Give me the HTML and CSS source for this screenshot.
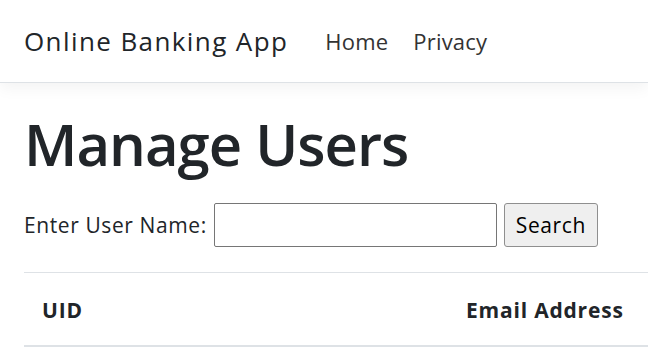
FILE: index.html
```html
<!DOCTYPE html>
<html lang="en">
<head>
  <meta charset="UTF-8">
  <meta name="viewport" content="width=device-width, initial-scale=1.0">
  <title>Manage Users - Online Banking App</title>
  <link rel="stylesheet" href="styles.css">
</head>
<body>
  <header class="navbar">
    <a class="brand" href="#">Online Banking App</a>
    <nav class="nav">
      <a class="nav-link" href="#">Home</a>
      <a class="nav-link" href="#">Privacy</a>
    </nav>
  </header>

  <main class="container">
    <h1>Manage Users</h1>
    <form class="search-form">
      <label for="username">Enter User Name:</label>
      <input type="text" id="username" name="username">
      <button type="submit">Search</button>
    </form>

    <table class="users">
      <thead>
        <tr>
          <th class="col-uid">UID</th>
          <th class="col-email">Email Address</th>
        </tr>
      </thead>
    </table>
  </main>
</body>
</html>
```

FILE: styles.css
```css
body {
  margin: 0;
  font-family: "Open Sans", "Noto Sans", sans-serif;
  color: #212529;
  background: #fff;
}

.navbar {
  display: flex;
  align-items: center;
  height: 82px;
  padding: 0 24px;
  border-bottom: 1px solid #dee2e6;
  box-shadow: 0 5px 15px rgba(0, 0, 0, 0.05);
}
.brand {
  font-size: 26px;
  letter-spacing: 1.4px;
  color: #212529;
  text-decoration: none;
  margin-right: 37px;
}
.nav {
  display: flex;
  gap: 25px;
}
.nav-link {
  font-size: 22px;
  letter-spacing: 0.2px;
  color: #333;
  text-decoration: none;
}

.container {
  padding-left: 24px;
}

h1 {
  font-size: 58px;
  font-weight: 600;
  letter-spacing: -1px;
  line-height: 72px;
  margin: 25px 0 23px;
}

.search-form {
  display: flex;
  align-items: center;
  font-size: 21px;
  letter-spacing: 0.6px;
}
.search-form label {
  margin-right: 7px;
}
.search-form input {
  width: 283px;
  height: 44px;
  box-sizing: border-box;
  border: 1px solid #767676;
  border-radius: 2px;
  margin: 0 7px 0 0;
}
.search-form button {
  height: 44px;
  width: 94px;
  font-family: inherit;
  font-size: 21px;
  letter-spacing: 0.6px;
  color: #000;
  background: #efefef;
  border: 1px solid #8f8f8f;
  border-radius: 3px;
}

.users {
  border-collapse: collapse;
  width: 100%;
  margin-top: 25px;
  border-top: 1px solid #dee2e6;
}
.users th {
  font-size: 21px;
  font-weight: 700;
  letter-spacing: 0.8px;
  line-height: 30px;
  text-align: left;
  padding: 22px 18px 20px;
  border-bottom: 2px solid #dee2e6;
}
.col-uid {
  width: 388px;
}
```
